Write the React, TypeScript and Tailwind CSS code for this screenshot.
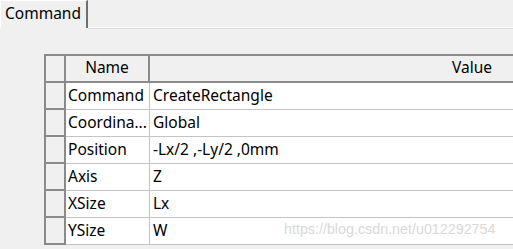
import React from "react";

const rows: [string, string][] = [
  ["Command", "CreateRectangle"],
  ["Coordina...", "Global"],
  ["Position", "-Lx/2 ,-Ly/2 ,0mm"],
  ["Axis", "Z"],
  ["XSize", "Lx"],
  ["YSize", "W"],
];

export default function App() {
  return (
    <div
      className="relative w-[513px] h-[249px] overflow-hidden bg-[#f0f0f0] text-black text-[15.5px] leading-none"
      style={{ fontFamily: '"Noto Sans", "Liberation Sans", sans-serif' }}
    >
      {/* Tab bar */}
      <div className="flex h-[29px]">
        <div className="w-[88px] h-[28px] border-l border-t border-white border-r-2 border-r-[#6f6f6f] bg-[#f0f0f0] flex items-center pl-[4px] pb-[1px]">
          Command
        </div>
        <div className="flex-1 flex flex-col">
          <div className="h-[27px]" />
          <div className="h-px bg-white" />
          <div className="h-px bg-[#dcdcdc]" />
        </div>
      </div>

      {/* Grid */}
      <div className="ml-[44px] mt-[25px] border-l-2 border-t-2 border-[#8a8a8a] bg-white">
        {/* Header */}
        <div className="flex h-[27px] border-b-2 border-[#8a8a8a] bg-[#f0f0f0]">
          <div className="w-[20px] border-r-2 border-[#8a8a8a]" />
          <div className="w-[84px] border-r-2 border-[#8a8a8a] flex items-center justify-center pb-[1px]">
            Name
          </div>
          <div className="flex-1 flex items-center justify-end pr-[21px] pb-[1px]">Value</div>
        </div>
        {rows.map(([n, v]) => (
          <div key={n} className="flex h-[27px]">
            <div className="w-[20px] bg-[#f0f0f0] border-r-2 border-b-2 border-[#8a8a8a]" />
            <div className="w-[84px] border-r border-b border-[#c4c4c4] flex items-center pl-[2px] pb-[1px] whitespace-nowrap overflow-hidden">
              {n}
            </div>
            <div className="flex-1 border-b border-[#c4c4c4] flex items-center pl-[3px] pb-[1px] whitespace-nowrap">
              {v}
            </div>
          </div>
        ))}
      </div>

      {/* Watermark */}
      <div
        className="absolute left-[284px] top-[222px] text-[14.3px] text-[#d9d9d9] leading-none"
        style={{ fontFamily: '"Liberation Sans", Arial, sans-serif' }}
      >
        https://blog.csdn.net/u012292754
      </div>
    </div>
  );
}
